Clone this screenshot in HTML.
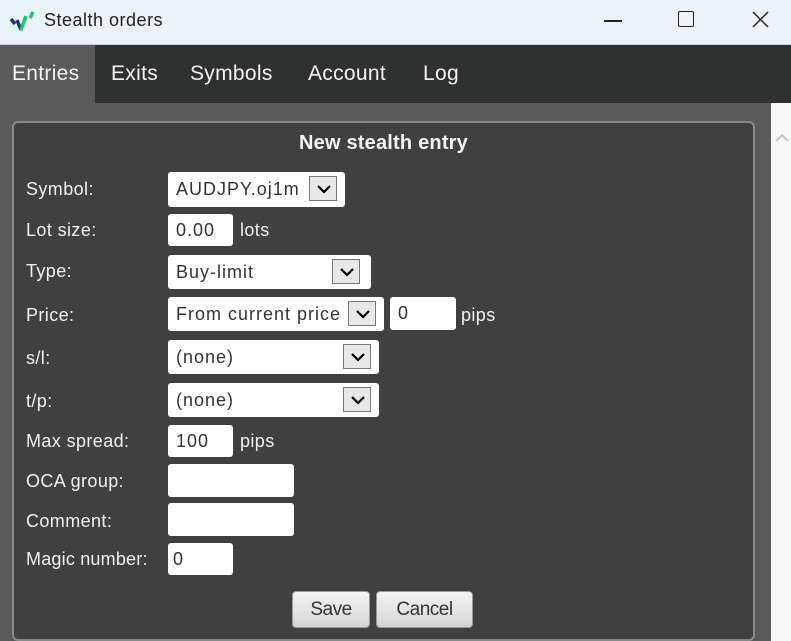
<!DOCTYPE html>
<html><head><style>
*{margin:0;padding:0;box-sizing:border-box}
body{width:791px;height:641px;overflow:hidden;background:#5a5a5a;font-family:"Liberation Sans",sans-serif;position:relative}
.a{position:absolute}
.title{left:0;top:0;width:791px;height:45px;background:#eaf3f7;border-bottom:1px solid #c8cfd2}
.tabs{left:0;top:45px;width:791px;height:58px;background:#2f3030}
.tab{position:absolute;top:0;height:58px;line-height:58px;color:#f2f2f2;font-size:21px;letter-spacing:0.3px}
.panel{left:12px;top:121px;width:743px;height:520px;background:#404040;border:2px solid #8a8a8a;border-radius:6px}
.lbl{position:absolute;left:26px;color:#f0f0f0;font-size:18px;letter-spacing:0.4px}
.box{position:absolute;background:#fff;border-radius:3px;color:#333;font-size:18px;letter-spacing:1px;padding-left:8px;white-space:nowrap;overflow:hidden}
.dd{position:absolute;top:4px;width:28px;height:25px;background:#e8e8e8;border:1px solid #777}
.dd svg{position:absolute;left:7px;top:7px}
.btn{position:absolute;top:591px;height:37px;background:linear-gradient(#f4f4f4,#d4d4d4);border:1px solid #999;border-radius:4px;color:#333;font-size:19px;text-align:center;line-height:35px;letter-spacing:-0.5px}
</style></head><body>
<div class="a title">
<svg class="a" style="left:8px;top:8px" width="28" height="26" viewBox="0 0 28 26"><path d="M3 11 L7 16" stroke="#1d3a66" stroke-width="3.5"/><path d="M9 12 L13 22" stroke="#1d3a66" stroke-width="3.5"/><path d="M13 22 L18 8" stroke="#22c46e" stroke-width="3.5"/><path d="M22 10 L25 4" stroke="#22c46e" stroke-width="3.5"/></svg>
<div class="a" style="left:44px;top:10px;font-size:18px;color:#222;letter-spacing:0.5px">Stealth orders</div>
<div class="a" style="left:604px;top:20px;width:18px;height:1.5px;background:#222"></div>
<div class="a" style="left:678px;top:11px;width:16px;height:16px;border:1.5px solid #222;border-radius:2px"></div>
<svg class="a" style="left:752px;top:11px" width="17" height="17"><path d="M1 1L16 16M16 1L1 16" stroke="#222" stroke-width="1.5"/></svg>
</div>
<div class="a tabs">
<div class="tab" style="left:0;width:95px;background:#5a5a5a;padding-left:12px">Entries</div>
<div class="tab" style="left:111px">Exits</div>
<div class="tab" style="left:190px">Symbols</div>
<div class="tab" style="left:308px">Account</div>
<div class="tab" style="left:423px">Log</div>
</div>
<div class="a" style="left:771px;top:103px;width:20px;height:538px;background:#f8f8f8"></div>
<svg class="a" style="left:775px;top:133px" width="14" height="10"><path d="M1 8L7 2L13 8" stroke="#c4c4c4" stroke-width="2" fill="none"/></svg>
<div class="a panel"></div>
<div class="a" style="left:12px;top:132px;width:743px;text-align:center;color:#f4f4f4;font-size:20px;font-weight:bold;letter-spacing:0.2px">New stealth entry</div>

<div class="lbl" style="top:179px">Symbol:</div>
<div class="box" style="left:168px;top:172px;width:177px;height:35px;line-height:35px">AUDJPY.oj1m<div class="dd" style="left:141px"><svg width="14" height="10"><path d="M1 2L7 8L13 2" stroke="#000" stroke-width="2.2" fill="none"/></svg></div></div>

<div class="lbl" style="top:220px">Lot size:</div>
<div class="box" style="left:168px;top:214px;width:65px;height:32px;line-height:32px">0.00</div>
<div class="lbl" style="left:240px;top:220px">lots</div>

<div class="lbl" style="top:261px">Type:</div>
<div class="box" style="left:168px;top:255px;width:203px;height:34px;line-height:34px">Buy-limit<div class="dd" style="left:164px"><svg width="14" height="10"><path d="M1 2L7 8L13 2" stroke="#000" stroke-width="2.2" fill="none"/></svg></div></div>

<div class="lbl" style="top:305px">Price:</div>
<div class="box" style="left:168px;top:297px;width:216px;height:34px;line-height:34px">From current price<div class="dd" style="left:180px"><svg width="14" height="10"><path d="M1 2L7 8L13 2" stroke="#000" stroke-width="2.2" fill="none"/></svg></div></div>
<div class="box" style="left:390px;top:297px;width:66px;height:33px;line-height:33px">0</div>
<div class="lbl" style="left:461px;top:305px">pips</div>

<div class="lbl" style="top:348px">s/l:</div>
<div class="box" style="left:168px;top:340px;width:211px;height:34px;line-height:34px">(none)<div class="dd" style="left:175px"><svg width="14" height="10"><path d="M1 2L7 8L13 2" stroke="#000" stroke-width="2.2" fill="none"/></svg></div></div>

<div class="lbl" style="top:391px">t/p:</div>
<div class="box" style="left:168px;top:383px;width:211px;height:34px;line-height:34px">(none)<div class="dd" style="left:175px"><svg width="14" height="10"><path d="M1 2L7 8L13 2" stroke="#000" stroke-width="2.2" fill="none"/></svg></div></div>

<div class="lbl" style="top:431px">Max spread:</div>
<div class="box" style="left:168px;top:425px;width:65px;height:32px;line-height:32px">100</div>
<div class="lbl" style="left:240px;top:431px">pips</div>

<div class="lbl" style="top:471px">OCA group:</div>
<div class="box" style="left:168px;top:464px;width:126px;height:33px"></div>
<div class="lbl" style="top:511px">Comment:</div>
<div class="box" style="left:168px;top:503px;width:126px;height:33px"></div>
<div class="lbl" style="top:549px;letter-spacing:0.2px">Magic number:</div>
<div class="box" style="left:168px;top:543px;width:65px;height:32px;line-height:32px;padding-left:5px">0</div>

<div class="btn" style="left:292px;width:78px">Save</div>
<div class="btn" style="left:376px;width:97px">Cancel</div>
</body></html>
